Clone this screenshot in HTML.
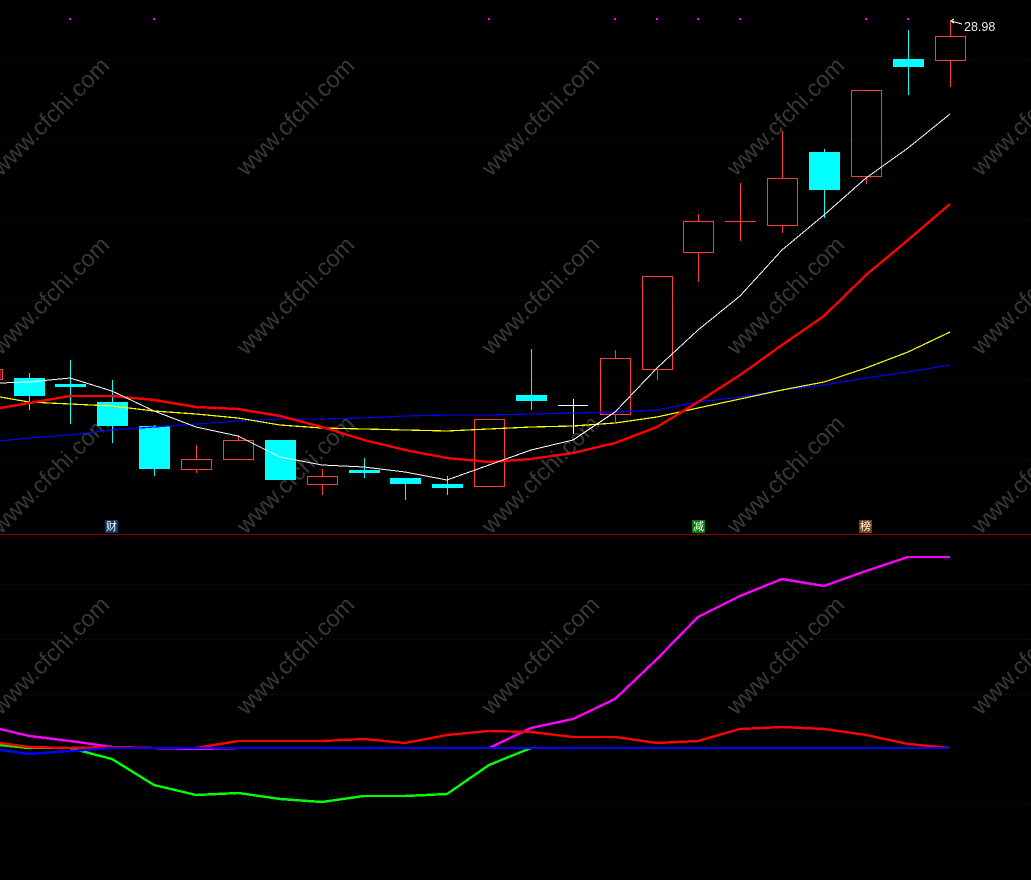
<!DOCTYPE html>
<html><head><meta charset="utf-8"><style>
html,body{margin:0;padding:0;background:#000;width:1031px;height:880px;overflow:hidden}
svg{display:block;position:absolute;left:0;top:0}
.w text{font:23.5px "Liberation Sans",sans-serif;fill:#383838}
.tag{position:absolute;width:13px;height:13px;top:520px;color:#fff;font:11px/13px "Noto Sans CJK SC","WenQuanYi Zen Hei",sans-serif;text-align:center}
</style></head><body>
<svg width="1031" height="880" viewBox="0 0 1031 880" xmlns="http://www.w3.org/2000/svg">
<g class="w">
<text transform="translate(1 177) rotate(-45)">www.cfchi.com</text><text transform="translate(246 177) rotate(-45)">www.cfchi.com</text><text transform="translate(491 177) rotate(-45)">www.cfchi.com</text><text transform="translate(736 177) rotate(-45)">www.cfchi.com</text><text transform="translate(981 177) rotate(-45)">www.cfchi.com</text>
<text transform="translate(1 356) rotate(-45)">www.cfchi.com</text><text transform="translate(246 356) rotate(-45)">www.cfchi.com</text><text transform="translate(491 356) rotate(-45)">www.cfchi.com</text><text transform="translate(736 356) rotate(-45)">www.cfchi.com</text><text transform="translate(981 356) rotate(-45)">www.cfchi.com</text>
<text transform="translate(1 535) rotate(-45)">www.cfchi.com</text><text transform="translate(246 535) rotate(-45)">www.cfchi.com</text><text transform="translate(491 535) rotate(-45)">www.cfchi.com</text><text transform="translate(736 535) rotate(-45)">www.cfchi.com</text><text transform="translate(981 535) rotate(-45)">www.cfchi.com</text>
<text transform="translate(1 716) rotate(-45)">www.cfchi.com</text><text transform="translate(246 716) rotate(-45)">www.cfchi.com</text><text transform="translate(491 716) rotate(-45)">www.cfchi.com</text><text transform="translate(736 716) rotate(-45)">www.cfchi.com</text><text transform="translate(981 716) rotate(-45)">www.cfchi.com</text>
</g>
<g stroke="#6c0000" stroke-width="1" stroke-dasharray="1 3" stroke-dashoffset="-1" shape-rendering="crispEdges" fill="none">
<path d="M0 59.5H1031M0 140.5H1031M0 220.5H1031M0 300.5H1031M0 380.5H1031M0 460.5H1031M0 584.5H1031M0 639.5H1031M0 694.5H1031M0 803.5H1031"/>
</g>
<path d="M0 534.5H1031" stroke="#8f0000" stroke-width="1" shape-rendering="crispEdges"/>
<g fill="#ff00ff" shape-rendering="crispEdges">
<rect x="69" y="18" width="2" height="2"/><rect x="153" y="18" width="2" height="2"/><rect x="488" y="18" width="2" height="2"/><rect x="614" y="18" width="2" height="2"/><rect x="656" y="18" width="2" height="2"/><rect x="697" y="18" width="2" height="2"/><rect x="739" y="18" width="2" height="2"/><rect x="865" y="18" width="2" height="2"/><rect x="907" y="18" width="2" height="2"/>
</g>
<g shape-rendering="crispEdges">
<g stroke="#00ffff" fill="none">
<path d="M29.5 373V410M70.5 360V424M112.5 380V443M154.5 425V476M364.5 458V478M405.5 478V500M447.5 476V495M531.5 349V410M824.5 149V218M908.5 30V95"/>
</g>
<g fill="#00ffff">
<rect x="14" y="378" width="31" height="18"/><rect x="55" y="384" width="31" height="3"/><rect x="97" y="402" width="31" height="24"/><rect x="139" y="426" width="31" height="43"/><rect x="265" y="440" width="31" height="40"/><rect x="349" y="470" width="31" height="3"/><rect x="390" y="478" width="31" height="6"/><rect x="432" y="484" width="31" height="4"/><rect x="516" y="395" width="31" height="6"/><rect x="809" y="152" width="31" height="38"/><rect x="893" y="59" width="31" height="8"/>
</g>
<g stroke="#ff3c3c" fill="none">
<path d="M196.5 445V459M196.5 470V473M238.5 435V440M322.5 469V476M322.5 485V495M615.5 350V358M615.5 414V422M657.5 369V380M698.5 214V221M698.5 252V282M740.5 183V241M725 221.5H756M782.5 131V178M782.5 226V233M866.5 177V184M950.5 20V36M950.5 61V87"/>
<rect x="0" y="369.5" width="2.5" height="10"/>
<rect x="181.5" y="459.5" width="30" height="10"/><rect x="223.5" y="440.5" width="30" height="19"/><rect x="307.5" y="476.5" width="30" height="8"/><rect x="474.5" y="419.5" width="30" height="67"/><rect x="600.5" y="358.5" width="30" height="56"/><rect x="642.5" y="276.5" width="30" height="93"/><rect x="683.5" y="221.5" width="30" height="31"/><rect x="767.5" y="178.5" width="30" height="47"/><rect x="851.5" y="90.5" width="30" height="86"/><rect x="935.5" y="36.5" width="30" height="24"/>
</g>
<path d="M558 405.5H588M573.5 399V434" stroke="#fff" fill="none"/>
</g>
<g fill="none" stroke-linejoin="round" shape-rendering="crispEdges">
<polyline stroke="#0000ff" stroke-width="1.2" points="0,441 29,438 70,435 112,430 154,427 196,424 238,421 280,419 322,419 364,418 405,416 447,415 489,415 531,414 573,413 615,412 657,410 698,402 740,397 782,390 824,385 866,378 908,372 950,365"/>
<polyline stroke="#ffff00" stroke-width="1.2" points="0,397 29,402 70,404 112,406 154,411 196,414 238,418 280,425 322,428 364,429 405,430 447,431 489,429 531,427 573,426 615,423 657,417 698,408 740,399 782,390 824,382 866,368 908,352 950,332"/>
<polyline stroke="#ff0000" stroke-width="2.4" points="0,408 29,403 70,396 112,396 154,400 196,407 238,409 280,416 322,427 364,440 405,450 447,458 489,462 531,459 573,453 615,443 657,427 698,402 740,375 782,345 824,316 866,275 908,240 950,204"/>
<polyline stroke="#ffffff" stroke-width="1" points="0,383 29,382 70,378 112,391 154,411 196,427 238,436 280,457 322,465 364,467 405,472 447,480 489,465 531,450 573,440 615,412 657,368 698,330 740,296 782,250 824,215 866,178 908,148 950,114"/>
<polyline stroke="#ff00ff" stroke-width="2.4" points="0,729 29,736 70,741 112,747 154,748 196,749 238,748 489,748 531,728 573,719 615,699 657,659 698,617 740,596 782,579 824,586 866,571 908,557 950,557"/>
<polyline stroke="#00ff00" stroke-width="2.4" points="0,745 29,748 70,748 85,752 112,759 154,785 196,795 238,793 280,799 322,802 364,796 405,796 447,794 489,765 531,748"/>
<polyline stroke="#ff0000" stroke-width="2.4" points="0,743 29,747 70,748 112,747 154,748 196,748 238,741 280,741 322,741 364,739 405,743 447,735 489,731 531,732 573,737 615,737 657,743 698,741 740,729 782,727 824,729 866,735 908,744 950,748"/>
<polyline stroke="#0000ff" stroke-width="2.4" points="0,750 29,754 70,751 112,748 950,748"/>
<path d="M962 24L951 21M951 21L954 19M951 21L954 23" stroke="#fff" stroke-width="1"/>
</g>
<text x="964" y="31" font-family="Liberation Sans, sans-serif" font-size="12.5" fill="#ececec">28.98</text>
</svg>
<div class="tag" style="left:105px;background:#0a3a6a">财</div>
<div class="tag" style="left:692px;background:#087a10">减</div>
<div class="tag" style="left:859px;background:#7a3f10">榜</div>
</body></html>
